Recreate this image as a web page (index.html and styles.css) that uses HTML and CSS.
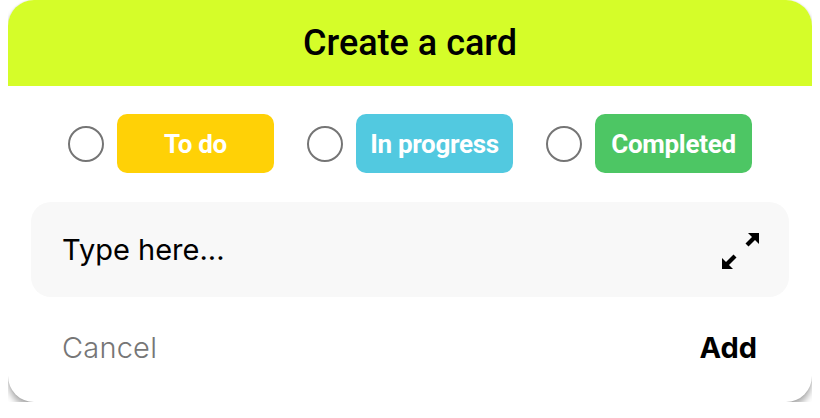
FILE: index.html
```html
<!DOCTYPE html>
<html lang="en">
<head>
  <meta charset="UTF-8" />
  <meta name="viewport" content="width=device-width, initial-scale=1.0"/>
  <title>Create a card</title>
  <link rel="stylesheet" href="styles.css">
</head>
<body>

  <div class="card">
    <div class="card-header">
      <h1>Create a card</h1>
    </div>

    <div class="status-row">
      <label class="status">
        <span class="radio"></span>
        <span class="pill todo">To do</span>
      </label>
      <label class="status">
        <span class="radio"></span>
        <span class="pill progress">In progress</span>
      </label>
      <label class="status">
        <span class="radio"></span>
        <span class="pill done">Completed</span>
      </label>
    </div>

    <div class="input-box">
      <span class="placeholder">Type here...</span>
      <svg class="expand" width="38" height="37" viewBox="0 0 38 37">
        <polygon points="26,0 37,0 37,11" fill="#000"/>
        <line x1="33" y1="4" x2="25" y2="12" stroke="#000" stroke-width="4.2"/>
        <polygon points="0,25 0,36 11,36" fill="#000"/>
        <line x1="4" y1="32" x2="13" y2="23" stroke="#000" stroke-width="4.2"/>
      </svg>
    </div>

    <div class="card-footer">
      <button class="btn-cancel">Cancel</button>
      <button class="btn-add">Add</button>
    </div>
  </div>

</body>
</html>
```

FILE: styles.css
```css
* {
  box-sizing: border-box;
  margin: 0;
  padding: 0;
}

body {
  margin: 0 8px;
  background-color: #ffffff;
  font-family: Inter, "Liberation Sans", sans-serif;
}

.card {
  width: 804px;
  height: 402px;
  background-color: #ffffff;
  border-radius: 26px;
  overflow: hidden;
  box-shadow: 0 6px 6px rgba(0, 0, 0, 0.3), 0 0 2px rgba(0, 0, 0, 0.15);
}

.card-header {
  height: 86px;
  background-color: #d5fd29;
  display: flex;
  align-items: center;
  justify-content: center;
}

.card-header h1 {
  font-family: Roboto, sans-serif;
  font-weight: 500;
  font-size: 36px;
  letter-spacing: 0;
  color: #000;
}

.status-row {
  display: flex;
  justify-content: center;
  gap: 33px;
  padding-top: 28px;
}

.status {
  display: flex;
  align-items: center;
  gap: 13px;
}

.radio {
  width: 36px;
  height: 36px;
  border: 2px solid #757575;
  border-radius: 50%;
}

.pill {
  width: 157px;
  height: 59px;
  border-radius: 10px;
  display: flex;
  align-items: center;
  justify-content: center;
  font-family: Roboto, sans-serif;
  font-weight: 700;
  font-size: 26px;
  letter-spacing: -0.3px;
  color: #ffffff;
}

.todo {
  background-color: #ffd106;
}

.progress {
  background-color: #52c9e0;
}

.done {
  background-color: #4dc664;
}

.input-box {
  margin: 29px 23px 0;
  height: 95px;
  background-color: #f8f8f8;
  border-radius: 20px;
  display: flex;
  align-items: center;
  justify-content: space-between;
  padding: 0 29px 0 31px;
}

.placeholder {
  font-size: 29px;
  color: #000;
}

.expand {
  margin-top: 3px;
}

.card-footer {
  display: flex;
  justify-content: space-between;
  align-items: center;
  padding: 33px 55px 0 54px;
}

.card-footer button {
  background: none;
  border: none;
  font-family: Inter, "Liberation Sans", sans-serif;
  font-size: 29px;
  cursor: pointer;
}

.btn-cancel {
  color: #767676;
  font-weight: 300;
  letter-spacing: 0.2px;
}

.btn-add {
  color: #000;
  font-weight: 700;
  font-size: 30px;
}
```
